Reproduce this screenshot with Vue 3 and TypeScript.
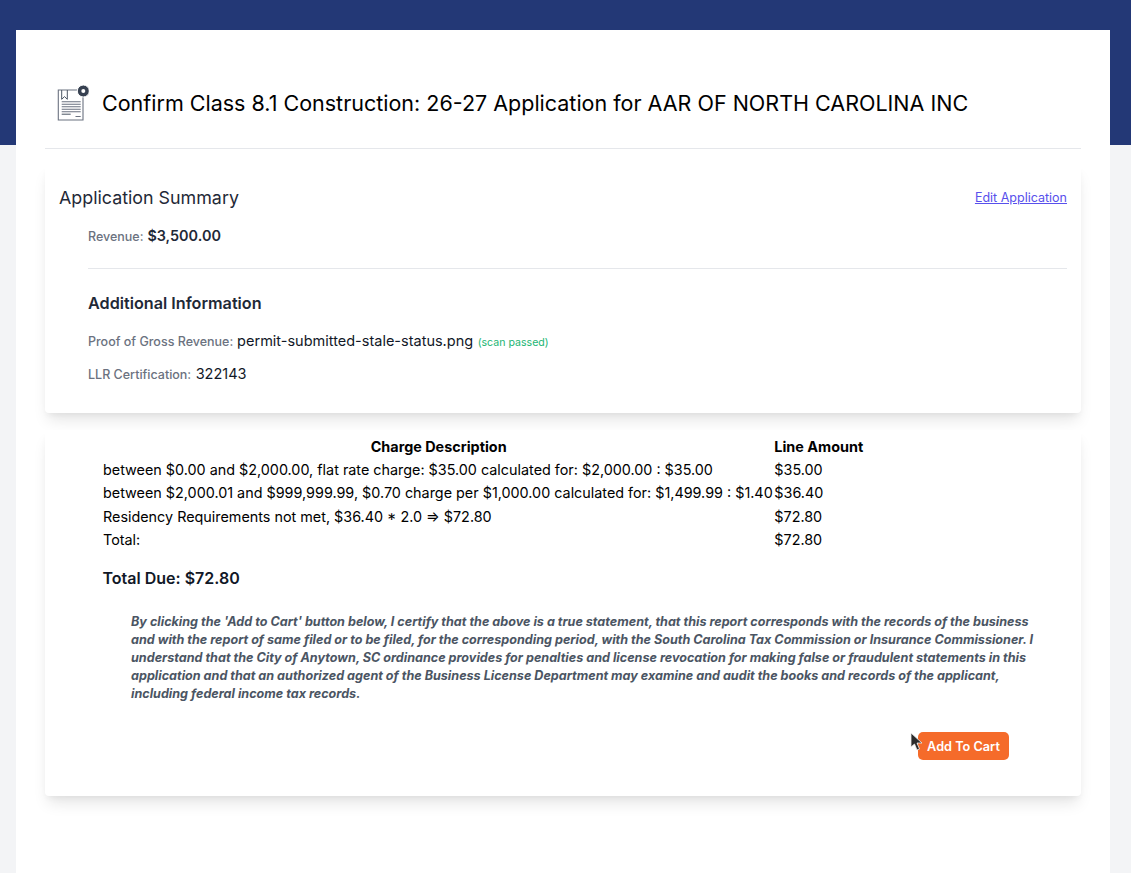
<script setup lang="ts">
interface Row { desc: string; amount: string }
const rows: Row[] = [
  { desc: 'between $0.00 and $2,000.00, flat rate charge: $35.00 calculated for: $2,000.00 : $35.00', amount: '$35.00' },
  { desc: 'between $2,000.01 and $999,999.99, $0.70 charge per $1,000.00 calculated for: $1,499.99 : $1.40', amount: '$36.40' },
  { desc: 'Residency Requirements not met, $36.40 * 2.0 => $72.80', amount: '$72.80' },
  { desc: 'Total:', amount: '$72.80' },
]
</script>

<template>
  <div class="page">
    <main class="sheet">
      <header class="head">
        <svg class="doc" width="32" height="38" viewBox="0 0 32 38" fill="none">
          <path d="M1.3 6H26V36H1.3Z" fill="#fff" stroke="#6b7280" stroke-width="1.1" />
          <path d="M4.7 6V15.3L7.5 12.6L10.3 15.3V6" stroke="#4b5563" stroke-width="1" fill="none" />
          <path d="M4.7 17.7H23.7M4.7 20.2H23.7M4.7 22.7H23.7M4.7 25.2H23.7M4.7 27.7H23.7" stroke="#6b7280" stroke-width="1.1" />
          <path d="M4.7 30.2H13.7" stroke="#4b5563" stroke-width="1" />
          <path d="M18.5 32.5H23.7" stroke="#6b7280" stroke-width="1" />
          <circle cx="26.3" cy="7" r="6" fill="#374151" stroke="#fff" stroke-width="1" />
          <circle cx="26.3" cy="7" r="2" fill="#fff" />
        </svg>
        <h1>Confirm Class 8.1 Construction: 26-27 Application for AAR OF NORTH CAROLINA INC</h1>
      </header>

      <section class="card summary">
        <div class="summary-top">
          <h2>Application Summary</h2>
          <a class="edit" href="#">Edit Application</a>
        </div>
        <div class="body">
          <p class="revenue"><span class="label">Revenue:</span> <strong>$3,500.00</strong></p>
          <hr />
          <h3>Additional Information</h3>
          <p class="field"><span class="label">Proof of Gross Revenue:</span> <span class="value">permit-submitted-stale-status.png</span> <span class="scan">(scan passed)</span></p>
          <p class="field cert"><span class="label">LLR Certification:</span> <span class="value">322143</span></p>
        </div>
      </section>

      <section class="card charges">
        <table>
          <thead>
            <tr><th class="c-desc">Charge Description</th><th class="c-amt">Line Amount</th></tr>
          </thead>
          <tbody>
            <tr v-for="r in rows" :key="r.desc + r.amount"><td>{{ r.desc }}</td><td>{{ r.amount }}</td></tr>
          </tbody>
        </table>
        <div class="total">Total Due: $72.80</div>
        <p class="legal">By clicking the 'Add to Cart' button below, I certify that the above is a true statement, that this report corresponds with the records of the business and with the report of same filed or to be filed, for the corresponding period, with the South Carolina Tax Commission or Insurance Commissioner. I understand that the City of Anytown, SC ordinance provides for penalties and license revocation for making false or fraudulent statements in this application and that an authorized agent of the Business License Department may examine and audit the books and records of the applicant, including federal income tax records.</p>
        <div class="actions">
          <button class="cart" type="button">
            Add To Cart
            <svg class="cursor" width="14" height="20" viewBox="0 0 14 20"><path d="M1 1V15L4.5 12L7 18L9.5 17L7 11H12Z" fill="#2b2b2b" stroke="#eee" stroke-width="0.8" /></svg>
          </button>
        </div>
      </section>
    </main>
  </div>
</template>

<style>
html, body { margin: 0; background: #f3f4f6; }
</style>

<style scoped>
.page {
  min-height: 873px;
  height: 873px;
  overflow: hidden;
  box-sizing: border-box;
  padding: 30px 21px 0 16px;
  background: linear-gradient(#233876 145px, #f3f4f6 145px);
  font-family: Inter, sans-serif;
  color: #111827;
}
.sheet {
  background: #fff;
  height: 843px;
  box-sizing: border-box;
  padding: 0 29px;
}
.head {
  display: flex;
  align-items: center;
  height: 119px;
  padding: 27px 0 0 12px;
  box-sizing: border-box;
  border-bottom: 1px solid #e5e7eb;
  gap: 13px;
}
.doc { flex: none; margin-top: 1px; }
h1 { margin: 0; font-size: 21.5px; font-weight: 400; line-height: 28px; color: #000; }
.card {
  background: #fff;
  border-radius: 4px;
  box-shadow: 0 10px 15px -3px rgba(0,0,0,.1), 0 4px 6px -2px rgba(0,0,0,.05);
}
.summary { margin-top: 16px; height: 248px; box-sizing: border-box; padding: 21px 14px 0; }
.summary-top { display: flex; justify-content: space-between; align-items: center; }
h2 { margin: 0; font-size: 17.85px; font-weight: 400; line-height: 24px; color: #1f2937; }
.edit { font-size: 12.5px; color: #5850ec; text-decoration: underline; margin-top: -1px; }
.body { padding-left: 29px; }
p { margin: 0; }
.label { font-size: 12.5px; font-weight: 500; color: #6b7280; margin-right: -0.6px; }
.cert .label { margin-right: 0; }
.revenue { margin-top: 14px; line-height: 22px; }
.revenue strong { font-size: 14.4px; font-weight: 600; color: #1f2937; }
hr { border: 0; border-top: 1px solid #e5e7eb; margin: 20px 0 0; }
h3 { margin: 23px 0 0; font-size: 16.2px; font-weight: 600; line-height: 22px; color: #1f2937; }
.field { margin-top: 15px; line-height: 22px; }
.field.cert { margin-top: 8px; }
.value { font-size: 14.5px; color: #111827; }
.scan { font-size: 10.6px; color: #22b573; }
.charges { position: relative; margin-top: 17px; height: 366px; box-sizing: border-box; padding: 4.8px 58px 0; }
table { border-collapse: separate; border-spacing: 0; font-size: 14.36px; color: #000; }
th { font-weight: 700; text-align: center; padding: 2px 0; line-height: 19.3px; font-size: 14.4px; }
th.c-amt { text-align: left; }
td { padding: 2px 0; line-height: 19.3px; white-space: nowrap; }
td:first-child { padding-right: 1.6px; }
.total { margin-top: 16px; margin-left: -0.5px; font-size: 16px; font-weight: 600; line-height: 22px; color: #111827; }
.legal {
  margin: 24px 0 0 28px;
  width: 905px;
  font-size: 12.6px;
  line-height: 18px;
  font-style: italic;
  font-weight: 700;
  color: #4b5563;
}
.actions { display: flex; justify-content: flex-end; margin-top: 29px; padding-right: 14px; }
.cart {
  position: relative;
  width: 91px;
  height: 28px;
  padding: 0;
  border: 0;
  border-radius: 5px;
  background: #f56b2a;
  color: #fff;
  font: 600 12.7px Inter, sans-serif;
}
.cursor { position: absolute; left: -8px; top: 0; }
</style>
